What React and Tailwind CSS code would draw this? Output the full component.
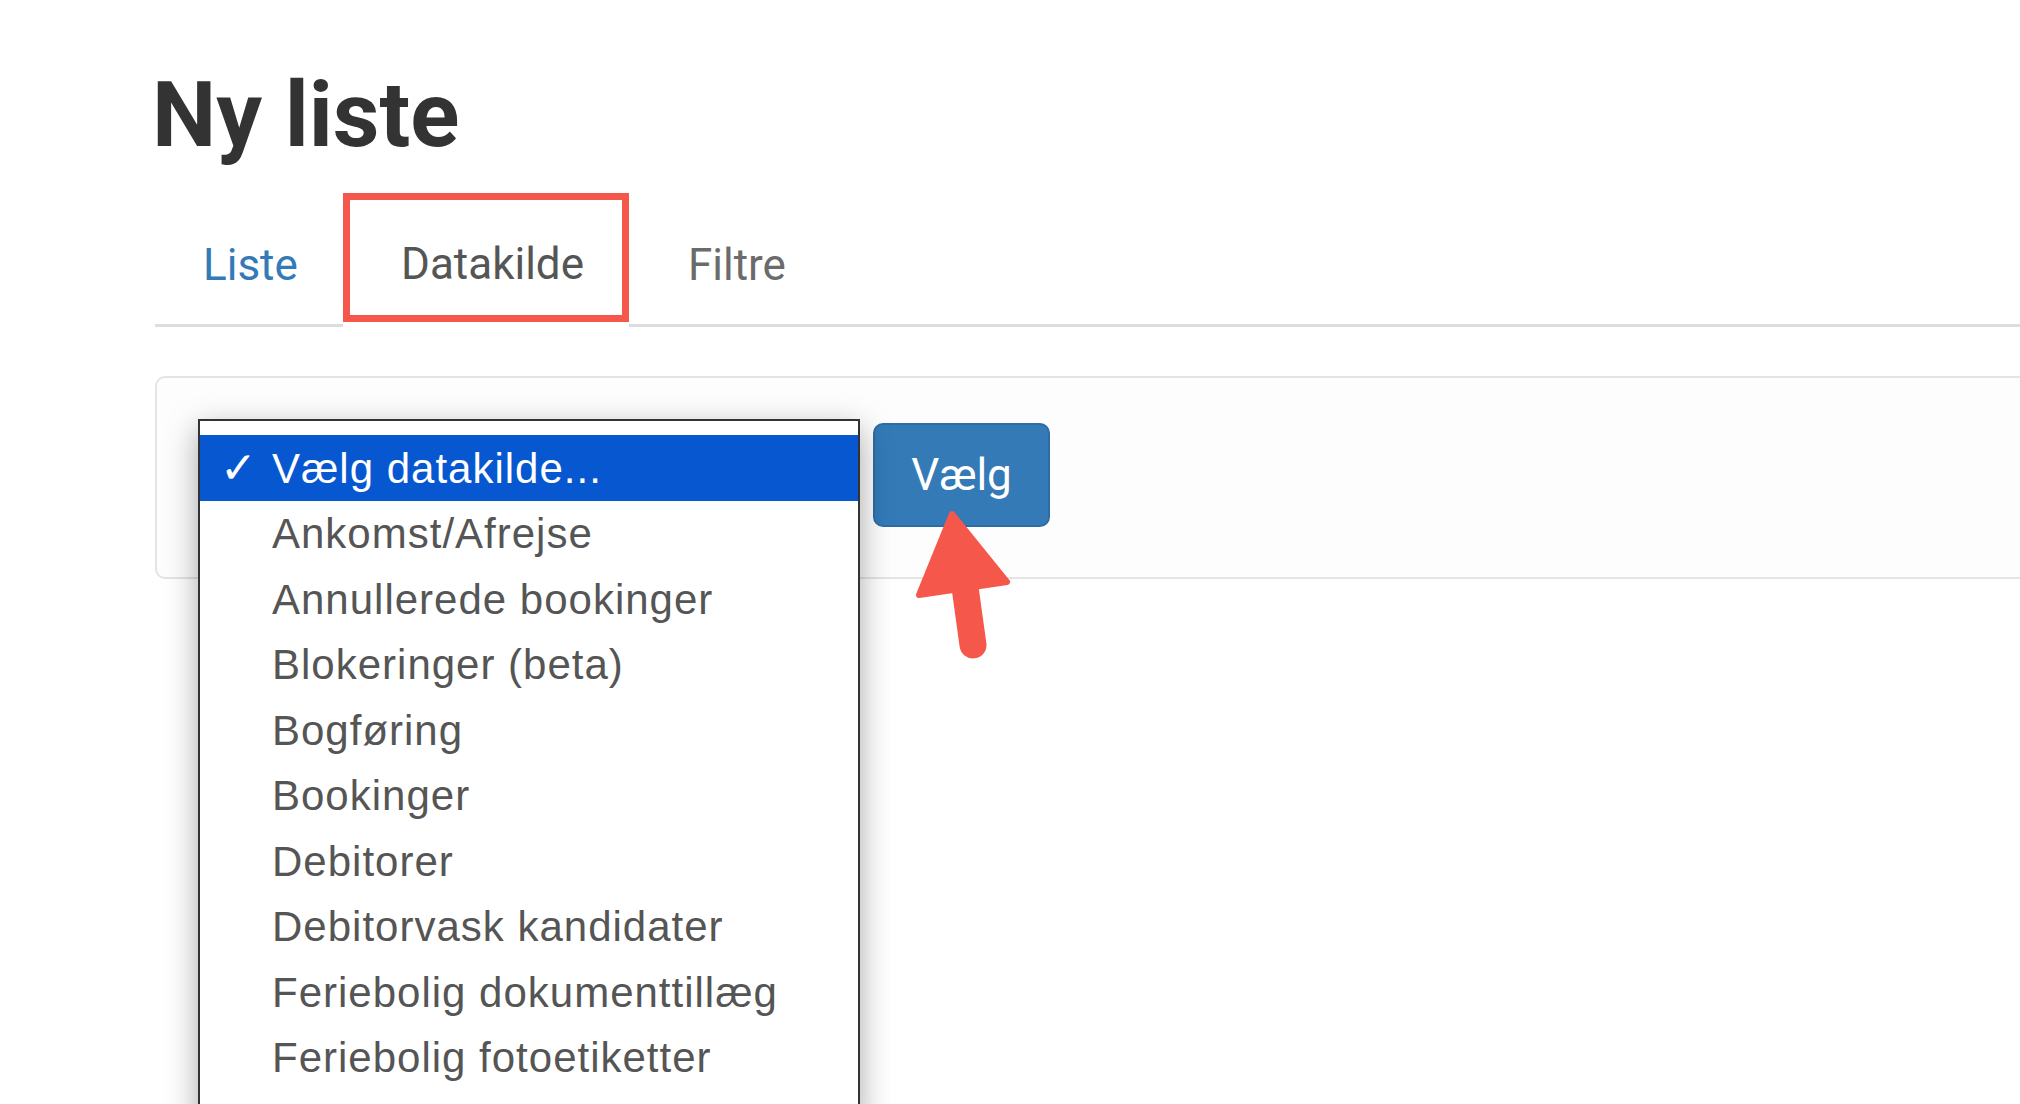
import React from "react";

const options = [
  "Ankomst/Afrejse",
  "Annullerede bookinger",
  "Blokeringer (beta)",
  "Bogføring",
  "Bookinger",
  "Debitorer",
  "Debitorvask kandidater",
  "Feriebolig dokumenttillæg",
  "Feriebolig fotoetiketter",
];

// Red annotation arrow pointing at the button
const Arrow = () => (
  <svg width="130" height="170" viewBox="0 0 130 170" className="absolute left-[900px] top-[500px]">
    <path d="M52 14 L107 82 L19 95 Z" fill="#f5574a" stroke="#f5574a" strokeWidth="6" strokeLinejoin="round" />
    <line x1="64" y1="80" x2="73" y2="145" stroke="#f5574a" strokeWidth="27" strokeLinecap="round" />
  </svg>
);

export default function App() {
  return (
    <div className="relative h-[1104px] w-[2020px] overflow-hidden bg-white font-['Roboto',sans-serif]">
      <div className="pl-[155px] pt-[70px]">
        {/* Heading */}
        <h1 className="-ml-[3px] text-[91px] font-bold leading-[90px] text-[#333]">Ny liste</h1>

        {/* Tabs */}
        <div className="mt-[33px] flex items-end text-[44px]">
          <div className="box-border flex h-[134px] w-[188px] items-center border-b-[3px] border-[#ddd] pl-[48px] pt-[13px] text-[#337ab7]">
            Liste
          </div>
          <div className="h-[134px] w-[286px]">
            <div className="box-border flex h-[129px] items-center border-[7px] border-[#f5574a] pl-[51px] pt-[13px] text-[#555]">
              Datakilde
            </div>
          </div>
          <div className="box-border flex h-[134px] flex-1 items-center border-b-[3px] border-[#ddd] pl-[59px] pt-[13px] text-[#6b6b6b]">
            Filtre
          </div>
        </div>

        {/* Panel */}
        <div className="-mr-[20px] mt-[49px] rounded-[10px] border-2 border-[#e4e4e4] bg-[#fdfdfd] pb-[50px] pl-[41px] pt-[45px]">
          <div className="flex items-start">
            <div className="relative h-[104px] w-[662px]">
              {/* open select list */}
              <div className="absolute left-0 top-[-4px] z-10 h-[700px] w-[662px] border-2 border-[#333] bg-white pt-[14px] font-['Liberation_Sans',sans-serif] text-[42px] tracking-[1px] shadow-[0_10px_30px_rgba(0,0,0,0.35)]">
                <div className="flex h-[66px] items-center bg-[#0757d1] text-white">
                  <span className="w-[72px] pl-[20px] font-['DejaVu_Sans',sans-serif] text-[44px] font-bold">✓</span>
                  <span>Vælg datakilde...</span>
                </div>
                {options.map((o) => (
                  <div key={o} className="flex h-[65.5px] items-center pl-[72px] text-[#555]">
                    {o}
                  </div>
                ))}
              </div>
            </div>
            <button className="ml-[13px] h-[104px] w-[177px] rounded-[10px] border-2 border-[#2e6da4] bg-[#337ab7] text-[44px] text-white">
              Vælg
            </button>
          </div>
        </div>
      </div>

      <Arrow />
    </div>
  );
}
